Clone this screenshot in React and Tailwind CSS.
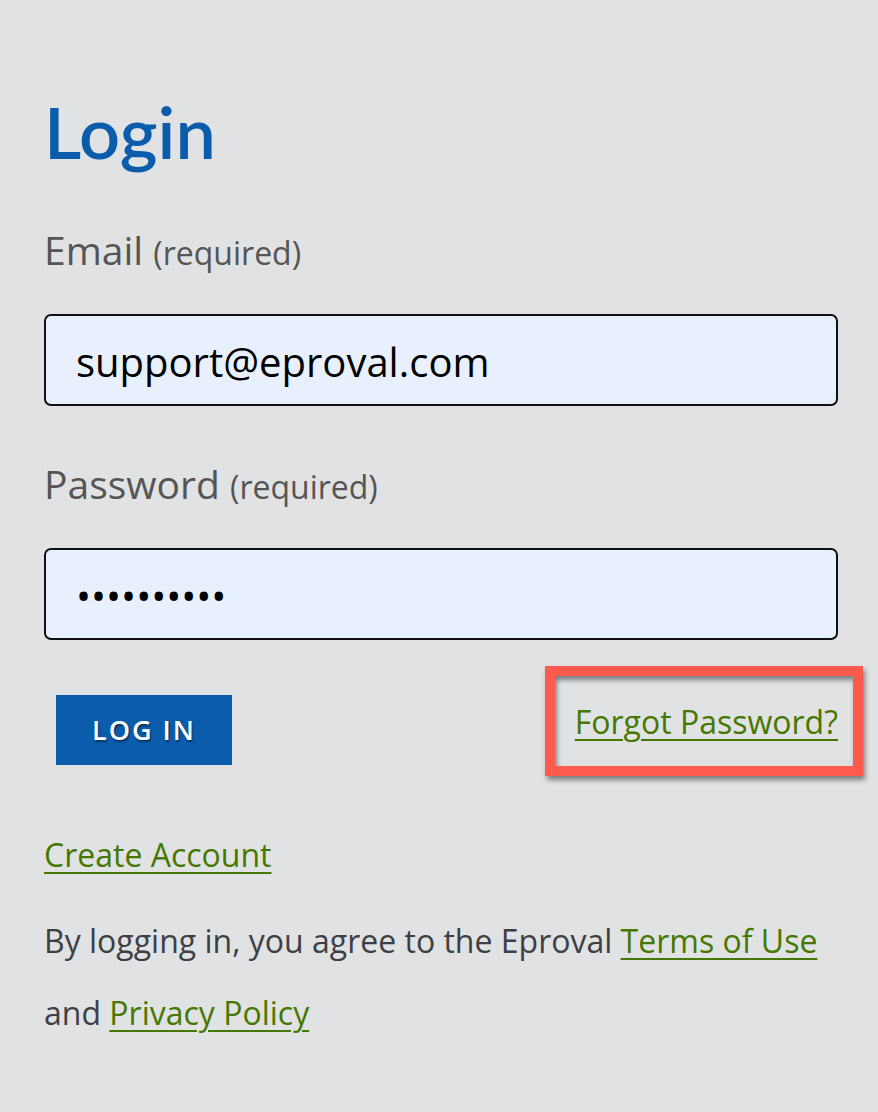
import React, { useState } from 'react';

const openSans = { fontFamily: '"Open Sans", "Noto Sans", sans-serif' };

function Field({ label, type, value, onChange }) {
  return (
    <div>
      <label className="block text-[39px] leading-[40px] text-[#555]">
        {label} <span className="text-[32px]">(required)</span>
      </label>
      <input
        type={type}
        value={value}
        onChange={(e) => onChange(e.target.value)}
        className="mt-[41px] block h-[92px] w-full rounded-[7px] border-2 border-[#111] bg-[#e8f0fe] px-[30px] pt-[2px] text-[40px] text-black outline-none"
        style={openSans}
      />
    </div>
  );
}

export default function App() {
  const [email, setEmail] = useState('support@eproval.com');
  const [password, setPassword] = useState('0123456789');

  return (
    <div className="min-h-screen bg-[#e1e2e4] pl-[44px] pr-[40px] pt-[91px]" style={openSans}>
      <h1
        className="text-[72px] font-semibold leading-[80px] text-[#0b5dab]"
        style={{ fontFamily: 'Lato, "Open Sans", sans-serif' }}
      >
        Login
      </h1>

      <form className="mt-[59px]" onSubmit={(e) => e.preventDefault()}>
        <Field label="Email" type="email" value={email} onChange={setEmail} />
        <div className="mt-[58px]">
          <Field label="Password" type="password" value={password} onChange={setPassword} />
        </div>

        <div className="mt-[26px] flex items-start justify-between">
          <button
            type="submit"
            className="ml-3 mt-[29px] h-[70px] w-[176px] bg-[#0b5cab] text-[27px] font-semibold tracking-[2px] text-white [text-shadow:1px_2px_2px_rgba(0,0,0,0.45)]"
          >
            LOG IN
          </button>
          <div className="relative mt-[36px]">
            <a href="#" className="text-[32px] leading-[40px] text-[#467800] underline decoration-2 underline-offset-[5px]">
              Forgot Password?
            </a>
            {/* annotation box drawn over the link */}
            <div className="pointer-events-none absolute -left-[30px] -right-[25px] -top-[36px] h-[110px] border-[10px] border-[#fe5a4e] shadow-[2px_4px_5px_rgba(0,0,0,0.45),inset_2px_4px_5px_rgba(0,0,0,0.45)]" />
          </div>
        </div>
      </form>

      <div className="mt-[70px]">
        <a href="#" className="text-[32px] leading-[40px] text-[#467800] underline decoration-2 underline-offset-[5px]">
          Create Account
        </a>
      </div>

      <p className="mt-[30px] text-[32px] leading-[72px] text-[#3d3f45]">
        By logging in, you agree to the Eproval{' '}
        <a href="#" className="text-[#467800] underline decoration-2 underline-offset-[5px]">
          Terms of Use
        </a>{' '}
        and{' '}
        <a href="#" className="text-[#467800] underline decoration-2 underline-offset-[5px]">
          Privacy Policy
        </a>
      </p>
    </div>
  );
}
